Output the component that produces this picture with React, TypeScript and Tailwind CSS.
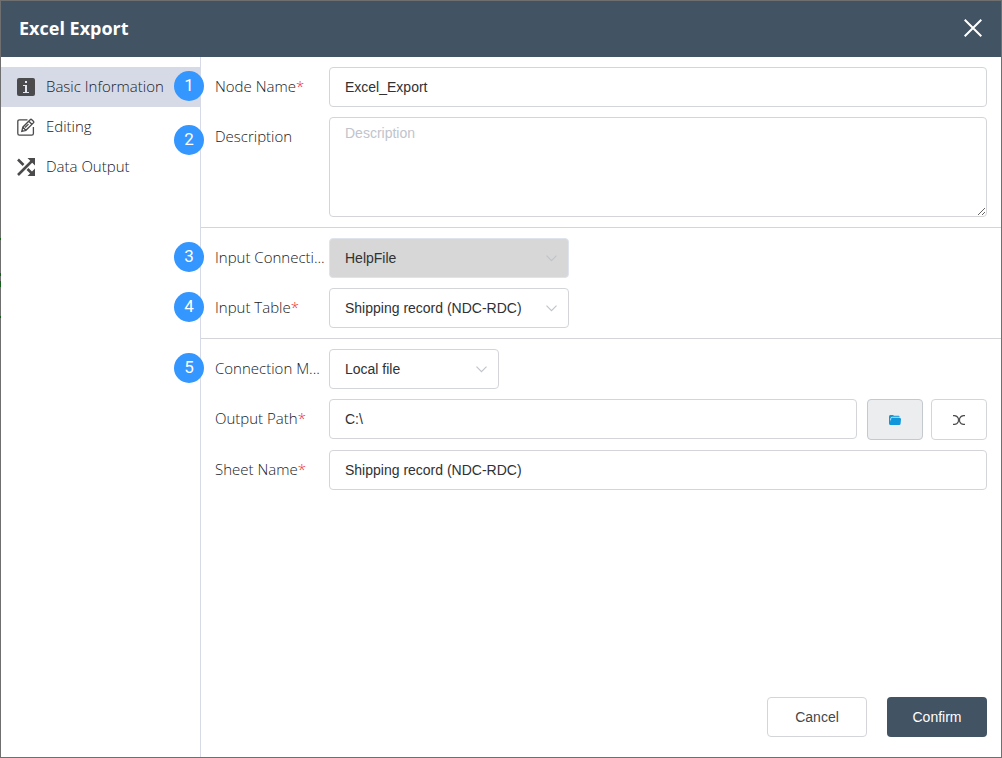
import React from 'react';
import type { ReactNode, SelectHTMLAttributes } from 'react';
import clsx from 'clsx';

const inputClass =
  'h-10 w-full rounded border border-[#d3d5d8] bg-white px-[15px] text-sm text-[#303133] outline-none focus:border-[#3496ff]';

const InfoIcon = () => (
  <svg width="18" height="18" viewBox="0 0 18 18" aria-hidden="true">
    <rect width="18" height="18" rx="2" fill="#4b4b4d" />
    <path d="M8 3h2v2H8zM6 7h4v7h2v1H6v-1h2V8H6z" fill="#e3e6ee" />
  </svg>
);

const EditIcon = () => (
  <svg width="18" height="18" viewBox="0 0 18 18" fill="none" stroke="#4b4b4d" strokeWidth="1.3" aria-hidden="true">
    <path d="M10.500 1.800H2.500Q.8 1.800.8 3.500v12Q.8 17.200 2.500 17.200h12.200q1.700 0 1.700-1.700V9" />
    <path d="M4.800 13.300l1-4.100 7.400-7.500q.8-.8 1.600 0l1.600 1.600q.8.8 0 1.600l-7.500 7.400zM11.800 3.200l3.100 3.100M5.900 9.300l2.900 2.900M8 9.500l3.500-3.400" />
  </svg>
);

const ShuffleIcon = () => (
  <svg width="18" height="18" viewBox="0 0 18 18" fill="none" stroke="#4b4b4d" strokeWidth="2.600" aria-hidden="true">
    <path d="M1 17L15 3M1 1.500l5.500 5.500M10.500 11l4.500 4.500" />
    <path d="M10.500 0H18v7.500zM18 10.500V18h-7.500z" fill="#4b4b4d" stroke="none" />
  </svg>
);

const CloseIcon = () => (
  <svg width="18" height="18" viewBox="0 0 18 18" stroke="#fff" strokeWidth="2" aria-hidden="true">
    <path d="M.7.7l16.600 16.600M17.300.7L.7 17.300" />
  </svg>
);

const FolderIcon = () => (
  <svg width="12" height="10" viewBox="0 0 12 10" aria-hidden="true">
    <path d="M0 1.500Q0 0 1.300 0H4l1 .7h4.600q1 0 1 1.300v2H2L1 9.500Q0 9.300 0 8z" fill="#1296db" />
    <path d="M1.700 5.500V3.900q0-1.600 1.600-1.600h8" fill="none" stroke="#d5ecf8" strokeWidth=".9" />
    <path d="M3.900 3h6.900q1.300 0 1.200 1.200l-.4 4.300q-.1 1.500-1.500 1.500H1.400Q0 10 .4 8.500l1.600-4Q2.500 3 3.900 3z" fill="#1296db" />
  </svg>
);

const VariableIcon = () => (
  <svg width="12" height="10" viewBox="0 0 12 10" fill="none" stroke="#4b4b4d" strokeWidth="1.100" aria-hidden="true">
    <path d="M0 .6h1.500Q4 .6 5.400 3.500v3Q4 9.400 1.500 9.400H0M12 .6h-1.500Q8 .6 6.600 3.500v3Q8 9.400 10.500 9.400H12" />
  </svg>
);

const navItems = [
  { label: 'Basic Information', icon: <InfoIcon />, active: true },
  { label: 'Editing', icon: <EditIcon />, active: false },
  { label: 'Data Output', icon: <ShuffleIcon />, active: false },
];

type RowProps = {
  id: string;
  label: string;
  required?: boolean;
  step?: number;
  tall?: boolean;
  children: ReactNode;
};

const Row = ({ id, label, required, step, tall, children }: RowProps) => (
  <div className="relative flex items-start">
    {step && (
      <span
        className={clsx(
          'absolute -left-[41px] flex size-[30px] items-center justify-center rounded-full bg-[#3496ff] font-[Roboto,sans-serif] text-[17px] text-white',
          tall ? 'top-2' : 'top-1',
        )}
      >
        {step}
      </span>
    )}
    <label
      htmlFor={id}
      className="w-[114px] shrink-0 text-[15px] leading-[38px] font-light whitespace-nowrap text-[#202124]"
    >
      {label}
      {required && <span className="text-[#f02b2b]">*</span>}
    </label>
    <div className="flex min-w-0 flex-1 font-['Liberation_Sans',Arial,sans-serif]">{children}</div>
  </div>
);

const Select = ({ className, children, ...props }: SelectHTMLAttributes<HTMLSelectElement>) => (
  <div className={clsx('relative', className)}>
    <select
      {...props}
      className={clsx(inputClass, 'appearance-none disabled:border-[#dfe3ec] disabled:bg-[#d7d7d7] disabled:opacity-100')}
    >
      {children}
    </select>
    <svg
      className="pointer-events-none absolute top-[17px] right-3"
      width="11"
      height="7"
      viewBox="0 0 11 7"
      fill="none"
      stroke="#c0c4cc"
      strokeWidth="1.200"
      aria-hidden="true"
    >
      <path d="M.5.7l5 5 5-5" />
    </svg>
  </div>
);

const App = () => {
  return (
    <div
      role="dialog"
      aria-labelledby="title"
      className="relative flex min-h-screen flex-col border border-[#6f6f6f] bg-white font-['Open_Sans','Noto_Sans',sans-serif]"
    >
      {/* Canvas node edges showing along the window border */}
      <span className="absolute top-[237px] -left-px h-[2px] w-px bg-[#14601a]" />
      <span className="absolute top-[272px] -left-px h-[3px] w-px bg-[#14601a]" />
      <span className="absolute top-[280px] -left-px h-[6px] w-px bg-[#14601a]" />
      <span className="absolute top-[315px] -left-px h-[2px] w-px bg-[#14601a]" />

      <header className="flex h-14 items-center justify-between bg-[#425363] pr-[19px] pb-[2px] pl-[18px]">
        <h1 id="title" className="text-lg font-bold text-white">
          Excel Export
        </h1>
        <button type="button" aria-label="Close">
          <CloseIcon />
        </button>
      </header>

      <div className="flex flex-1">
        <nav className="w-[200px] shrink-0 border-r border-[#d6d9e6] pt-[10px]">
          {navItems.map((item) => (
            <button
              key={item.label}
              type="button"
              className={clsx(
                'flex h-10 w-full items-center gap-[11px] pl-4 text-[15px] font-light whitespace-nowrap text-[#202124]',
                item.active && 'bg-[#d6d9e6]',
              )}
            >
              {item.icon}
              <span className="pb-[2px]">{item.label}</span>
            </button>
          ))}
        </nav>

        <form className="flex min-w-0 flex-1 flex-col" onSubmit={(e) => e.preventDefault()}>
          <section className="flex flex-col gap-[10px] border-b border-[#d3d5d8] px-[14px] py-[10px]">
            <Row id="node-name" label="Node Name" required step={1}>
              <input id="node-name" className={inputClass} defaultValue="Excel_Export" />
            </Row>
            <Row id="description" label="Description" step={2} tall>
              <textarea
                id="description"
                placeholder="Description"
                className="block h-[100px] w-full resize rounded border border-[#d3d5d8] px-[15px] py-[5px] text-sm text-[#303133] outline-none placeholder:text-[#c0c4cc]"
              />
            </Row>
          </section>

          <section className="flex flex-col gap-[10px] border-b border-[#d3d5d8] px-[14px] py-[10px]">
            <Row id="input-connection" label="Input Connecti..." step={3}>
              <Select id="input-connection" className="w-60" disabled>
                <option>HelpFile</option>
              </Select>
            </Row>
            <Row id="input-table" label="Input Table" required step={4}>
              <Select id="input-table" className="w-60">
                <option>Shipping record (NDC-RDC)</option>
              </Select>
            </Row>
          </section>

          <section className="flex flex-col gap-[10px] px-[14px] py-[10px]">
            <Row id="connection-mode" label="Connection M..." step={5}>
              <Select id="connection-mode" className="w-[170px]">
                <option>Local file</option>
              </Select>
            </Row>
            <Row id="output-path" label="Output Path" required>
              <input id="output-path" className={clsx(inputClass, 'min-w-0 flex-1')} defaultValue="C:\" />
              <button
                type="button"
                aria-label="Browse"
                className="ml-[10px] flex h-[41px] w-14 items-center justify-center rounded border border-[#c4c9d0] bg-[#ebedef]"
              >
                <FolderIcon />
              </button>
              <button
                type="button"
                aria-label="Insert variable"
                className="ml-2 flex h-[41px] w-14 items-center justify-center rounded border border-[#d3d5d8] bg-white"
              >
                <VariableIcon />
              </button>
            </Row>
            <Row id="sheet-name" label="Sheet Name" required>
              <input id="sheet-name" className={inputClass} defaultValue="Shipping record (NDC-RDC)" />
            </Row>
          </section>

          <footer className="mt-auto flex justify-end gap-5 px-[14px] pb-5 font-['Liberation_Sans',Arial,sans-serif] text-sm">
            <button type="button" className="h-10 w-[100px] rounded border border-[#d3d5d8] bg-white text-[#46474a]">
              Cancel
            </button>
            <button type="submit" className="h-10 w-[100px] rounded bg-[#425363] text-white">
              Confirm
            </button>
          </footer>
        </form>
      </div>
    </div>
  );
};

export default App;
